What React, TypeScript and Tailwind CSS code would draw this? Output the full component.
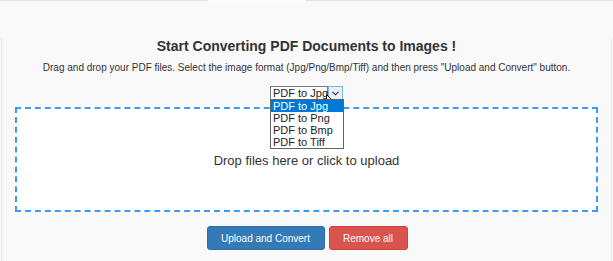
const options = ["PDF to Jpg", "PDF to Png", "PDF to Bmp", "PDF to Tiff"];

function Cursor() {
  return (
    <svg width="12" height="18" viewBox="0 0 12 18" className="absolute left-[56px] top-[8px]">
      <path d="M0.5 0.5 L0.5 13 L3.5 10.2 L5.8 15.5 L7.8 14.6 L5.6 9.5 L9.6 9.5 Z" fill="#fff" stroke="#000" strokeWidth="1" strokeLinejoin="round" />
    </svg>
  );
}

function FormatSelect() {
  return (
    <div className="relative flex justify-center h-[14px]">
      <div className="relative flex">
        <div className="flex h-[14px] w-[58px] items-center whitespace-nowrap border border-[#7a7a7a] bg-white pl-[2px] text-[11px] leading-none text-[#222]">
          PDF to Jpg
        </div>
        <div className="flex h-[14px] w-[15px] items-center justify-center border border-[#7eb4ea] bg-[#e5f1fb]">
          <svg width="7" height="5" viewBox="0 0 7 5">
            <path d="M0.5 0.8 L3.5 3.8 L6.5 0.8" fill="none" stroke="#333" strokeWidth="1.1" />
          </svg>
        </div>
        <ul className="absolute left-0 top-[13px] z-10 w-[74px] border border-[#646464] bg-white text-[11px] leading-[12px] text-[#222]">
          {options.map((o, i) => (
            <li key={o} className={i === 0 ? "bg-[#0078d7] pl-[2px] text-white" : "pl-[2px]"}>
              {o}
            </li>
          ))}
        </ul>
        <Cursor />
      </div>
    </div>
  );
}

export default function App() {
  return (
    <div
      className="w-[613px] h-[261px] overflow-hidden bg-[#f9f9f9] text-[#333]"
      style={{ fontFamily: 'Arial, "Liberation Sans", sans-serif' }}
    >
      <div className="flex h-px">
        <div className="w-[208px] bg-[#e3e3e3]" />
        <div className="w-[97px] bg-white" />
        <div className="flex-1 bg-[#e3e3e3]" />
      </div>
      <div className="mx-px h-[260px] border-x border-[#e6e6e6] px-[13px]">
        <h1 className="mt-[37px] text-center text-[14px] font-bold leading-[16px] text-[#333]">
          Start Converting PDF Documents to Images !
        </h1>
        <p className="mt-[8px] text-center text-[10px] leading-[12px] text-[#333]">
          Drag and drop your PDF files. Select the image format (Jpg/Png/Bmp/Tiff) and then press "Upload and Convert" button.
        </p>
        <div className="mt-[12px]">
          <FormatSelect />
        </div>
        <div className="mt-[7px] flex h-[105px] items-center justify-center border-2 border-dashed border-[#3d9cf2] bg-white">
          <span className="mt-[2px] text-[13px] text-[#333]">Drop files here or click to upload</span>
        </div>
        <div className="mt-[14px] flex justify-center gap-[4px] pl-[1px]">
          <button className="h-[24px] w-[118px] rounded-[3px] border border-[#2e6da4] bg-[#337ab7] text-[10px] text-white">
            Upload and Convert
          </button>
          <button className="h-[24px] w-[79px] rounded-[3px] border border-[#d43f3a] bg-[#d9534f] text-[10px] text-white">
            Remove all
          </button>
        </div>
      </div>
    </div>
  );
}
